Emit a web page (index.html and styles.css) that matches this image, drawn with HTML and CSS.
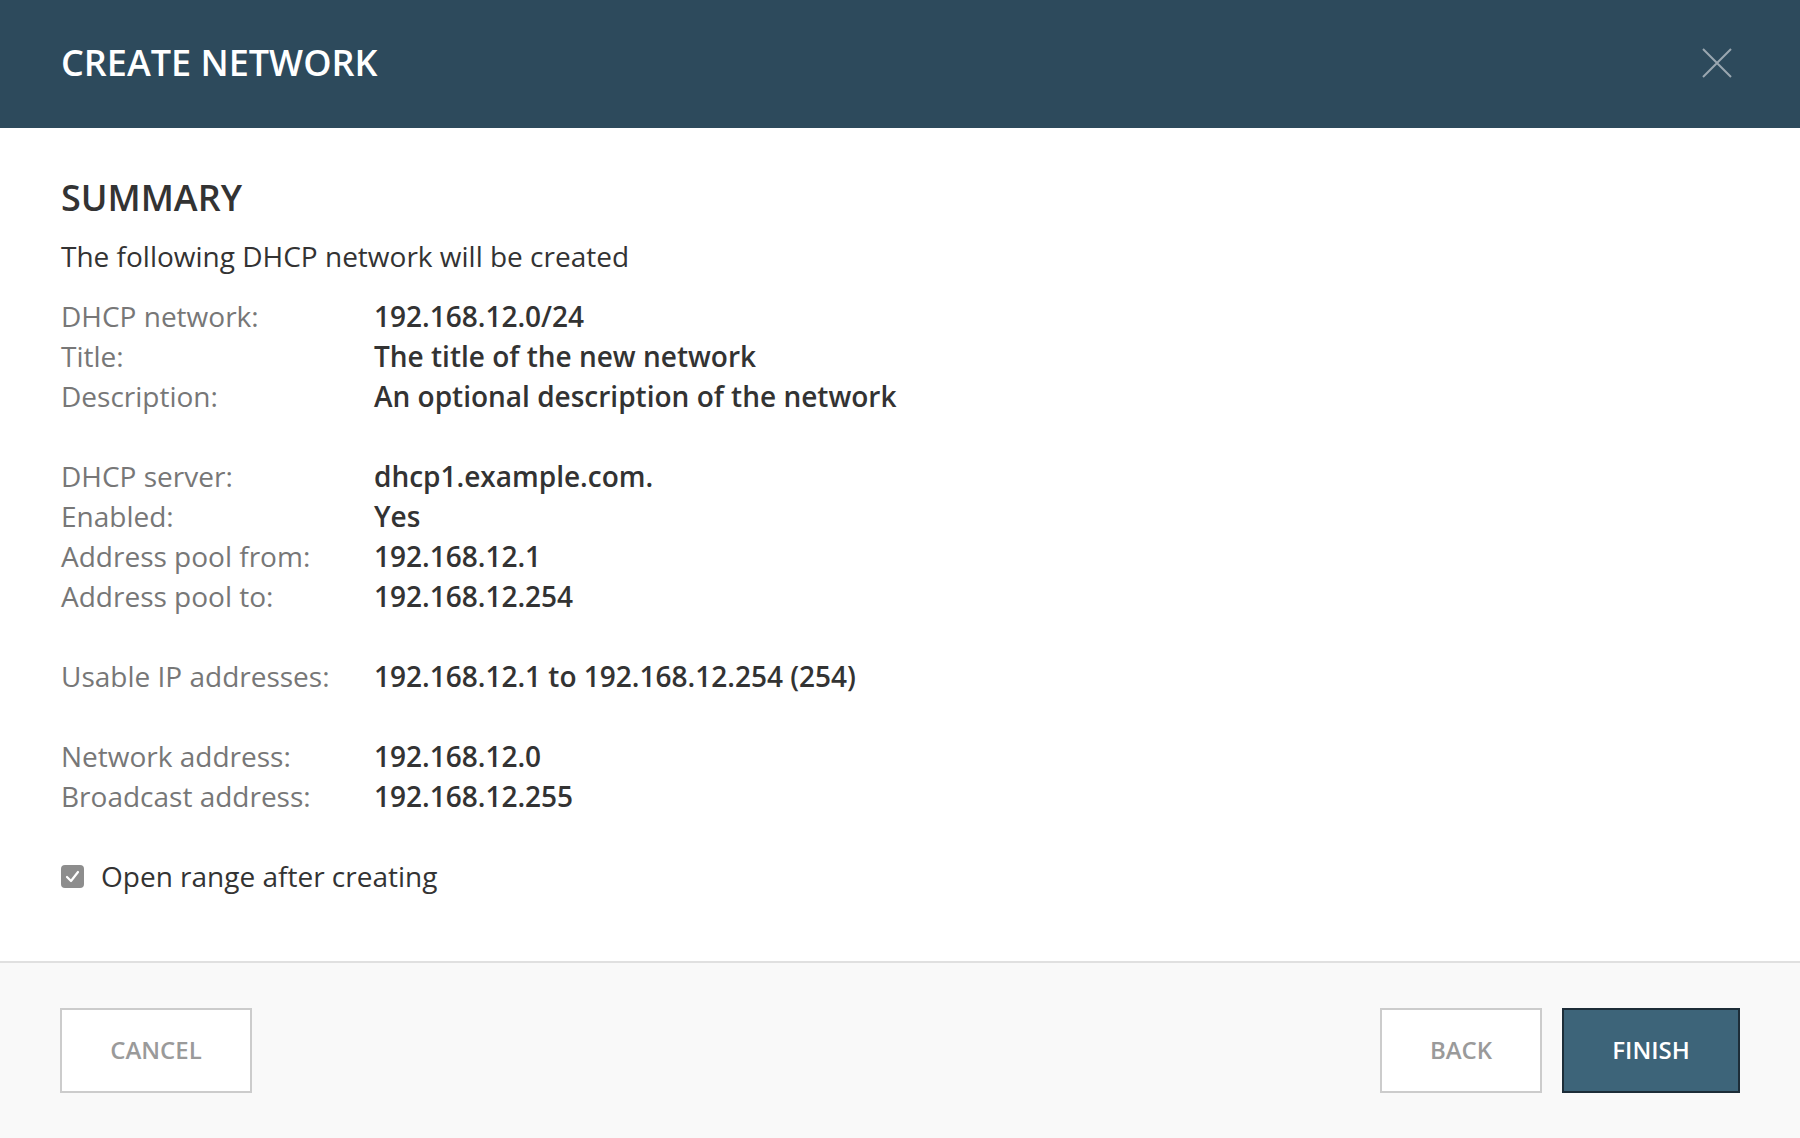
FILE: index.html
```html
<!DOCTYPE html>
<html lang="en">
<head>
<meta charset="utf-8">
<title>Create Network</title>
<link rel="stylesheet" href="styles.css">
</head>
<body>
<div class="dialog">
  <header class="dialog-header">
    <h1 class="dialog-title">CREATE NETWORK</h1>
    <button class="close-btn" aria-label="Close">
      <svg width="30" height="30" viewBox="0 0 30 30"><path d="M1 1 L29 29 M29 1 L1 29" stroke="#9aa7b0" stroke-width="2" fill="none"/></svg>
    </button>
  </header>
  <main class="dialog-body">
    <h2 class="section-title">SUMMARY</h2>
    <p class="intro">The following DHCP network will be created</p>
    <dl class="summary">
      <dt>DHCP network:</dt><dd>192.168.12.0/24</dd>
      <dt>Title:</dt><dd>The title of the new network</dd>
      <dt>Description:</dt><dd>An optional description of the network</dd>
    </dl>
    <dl class="summary">
      <dt>DHCP server:</dt><dd>dhcp1.example.com.</dd>
      <dt>Enabled:</dt><dd>Yes</dd>
      <dt>Address pool from:</dt><dd>192.168.12.1</dd>
      <dt>Address pool to:</dt><dd>192.168.12.254</dd>
    </dl>
    <dl class="summary">
      <dt>Usable IP addresses:</dt><dd>192.168.12.1 to 192.168.12.254 (254)</dd>
    </dl>
    <dl class="summary">
      <dt>Network address:</dt><dd>192.168.12.0</dd>
      <dt>Broadcast address:</dt><dd>192.168.12.255</dd>
    </dl>
    <label class="check-row">
      <span class="checkbox">
        <svg width="23" height="23" viewBox="0 0 23 23"><path d="M6 12 L10 16 L17 7" stroke="#fff" stroke-width="2.2" fill="none" stroke-linecap="round" stroke-linejoin="round"/></svg>
      </span>
      <span>Open range after creating</span>
    </label>
  </main>
  <footer class="dialog-footer">
    <button class="btn btn-cancel">CANCEL</button>
    <div class="footer-right">
      <button class="btn btn-back">BACK</button>
      <button class="btn btn-primary">FINISH</button>
    </div>
  </footer>
</div>
</body>
</html>
```

FILE: styles.css
```css
* { box-sizing: border-box; }
html, body {
  margin: 0;
  padding: 0;
  background: #ffffff;
  font-family: "Open Sans", "Noto Sans", sans-serif;
}
.dialog {
  display: flex;
  flex-direction: column;
  height: 100vh;
}
.dialog-header {
  height: 128px;
  background: #2d4a5c;
  display: flex;
  align-items: center;
  justify-content: space-between;
  padding: 0 68px 2px 61px;
}
.dialog-title {
  margin: 0;
  color: #ffffff;
  font-size: 36px;
  font-weight: 600;
  line-height: 44px;
  letter-spacing: 0;
}
.close-btn {
  background: none;
  border: 0;
  padding: 0;
  width: 30px;
  height: 30px;
  display: flex;
}
.dialog-body {
  padding: 50px 61px 0 61px;
  color: #333333;
  font-size: 28px;
  line-height: 40px;
  flex: 1;
}
.section-title {
  margin: 0;
  font-size: 36px;
  font-weight: 600;
  line-height: 40px;
  color: #333333;
}
.intro {
  margin: 18px 0 20px 0;
}
.summary {
  margin: 0 0 40px 0;
  display: grid;
  grid-template-columns: 313px 1fr;
}
.summary dt {
  color: #777777;
}
.summary dd {
  margin: 0;
  font-weight: 600;
  color: #333333;
}
.check-row {
  display: flex;
  align-items: center;
  gap: 17px;
  color: #333333;
}
.checkbox {
  width: 23px;
  height: 23px;
  border-radius: 4px;
  background: #8d8d8d;
  display: flex;
}
.dialog-footer {
  border-top: 2px solid #e0e0e0;
  background: #f9f9f9;
  padding: 45px 60px 45px 60px;
  display: flex;
  justify-content: space-between;
  align-items: center;
}
.footer-right {
  display: flex;
  gap: 20px;
}
.btn {
  height: 85px;
  padding: 0 0 2px 0;
  font-family: "Open Sans", "Noto Sans", sans-serif;
  font-size: 24px;
  font-weight: 600;
  background: #ffffff;
  border: 2px solid #cccccc;
  color: #9a9a9a;
}
.btn-cancel { width: 192px; }
.btn-back { width: 162px; }
.btn-primary {
  width: 178px;
  background: #3d6479;
  border-color: #1d2d38;
  color: #ffffff;
}
```
